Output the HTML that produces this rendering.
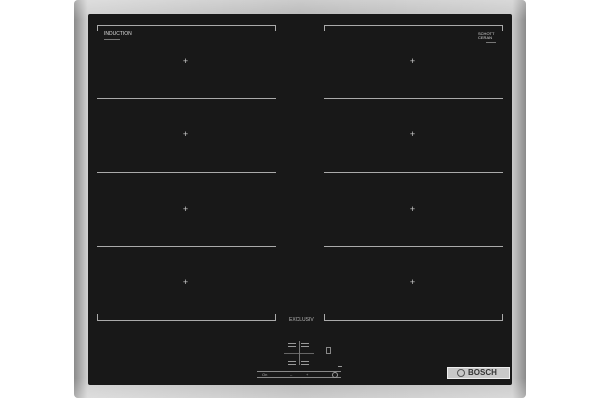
<!DOCTYPE html>
<html><head><meta charset="utf-8"><style>
html,body{margin:0;width:600px;height:400px;background:#fff;overflow:hidden;font-family:"Liberation Sans",sans-serif}
.steel{position:absolute;left:74px;top:0;width:452px;height:398px;border-radius:4px;
background:linear-gradient(90deg,#8a8a8a 0%,#cfcfcf 3%,#b5b5b5 50%,#c8c8c8 97%,#8a8a8a 100%);}
.steel:after{content:"";position:absolute;inset:0;background:linear-gradient(180deg,rgba(255,255,255,.3),rgba(0,0,0,0) 5%,rgba(0,0,0,0) 95%,rgba(255,255,255,.3));border-radius:4px}
.black{position:absolute;left:88px;top:14px;width:424px;height:371px;background:#181818;border-radius:2px}
.ln{position:absolute;height:1px;background:#aaa}
.br{position:absolute;width:1px;height:6px;background:#aaa}
.p{position:absolute;color:#ccc;font-size:9px;line-height:9px;width:9px;text-align:center}
.t{position:absolute;color:#ddd;font-size:5px;line-height:5px}
</style></head><body>
<div class="steel"></div>
<div class="black"></div>
<div class="ln" style="left:97px;top:25px;width:179px"></div>
<div class="br" style="left:97px;top:25px"></div><div class="br" style="left:275px;top:25px"></div>
<div class="ln" style="left:97px;top:98px;width:179px"></div>
<div class="ln" style="left:97px;top:172px;width:179px"></div>
<div class="ln" style="left:97px;top:246px;width:179px"></div>
<div class="ln" style="left:97px;top:320px;width:179px"></div>
<div class="br" style="left:97px;top:314px"></div><div class="br" style="left:275px;top:314px"></div>
<div class="ln" style="left:324px;top:25px;width:179px"></div>
<div class="br" style="left:324px;top:25px"></div><div class="br" style="left:502px;top:25px"></div>
<div class="ln" style="left:324px;top:98px;width:179px"></div>
<div class="ln" style="left:324px;top:172px;width:179px"></div>
<div class="ln" style="left:324px;top:246px;width:179px"></div>
<div class="ln" style="left:324px;top:320px;width:179px"></div>
<div class="br" style="left:324px;top:314px"></div><div class="br" style="left:502px;top:314px"></div>
<div class="p" style="left:181px;top:57px">+</div><div class="p" style="left:408px;top:57px">+</div>
<div class="p" style="left:181px;top:130px">+</div><div class="p" style="left:408px;top:130px">+</div>
<div class="p" style="left:181px;top:205px">+</div><div class="p" style="left:408px;top:205px">+</div>
<div class="p" style="left:181px;top:278px">+</div><div class="p" style="left:408px;top:278px">+</div>
<div class="t" style="left:104px;top:32px">INDUCTION</div>
<div class="ln" style="left:104px;top:39px;width:16px;background:#777"></div>
<div class="t" style="left:478px;top:32px;font-size:4px;line-height:4px">SCHOTT<br>CERAN</div>
<div class="ln" style="left:486px;top:42px;width:10px;background:#777"></div>
<div class="t" style="left:289px;top:318px;font-size:5px;color:#bbb">EXCLUSIV</div>
<div class="ln" style="left:288px;top:343px;width:8px;background:#999"></div>
<div class="ln" style="left:301px;top:343px;width:8px;background:#999"></div>
<div class="ln" style="left:288px;top:346px;width:8px;background:#999"></div>
<div class="ln" style="left:301px;top:346px;width:8px;background:#999"></div>
<div class="ln" style="left:284px;top:353px;width:30px;background:#666"></div>
<div style="position:absolute;left:299px;top:341px;width:1px;height:24px;background:#777"></div>
<div class="ln" style="left:288px;top:361px;width:8px;background:#999"></div>
<div class="ln" style="left:301px;top:361px;width:8px;background:#999"></div>
<div class="ln" style="left:288px;top:364px;width:8px;background:#999"></div>
<div class="ln" style="left:301px;top:364px;width:8px;background:#999"></div>
<div style="position:absolute;left:326px;top:347px;width:3px;height:5px;border:1px solid #888"></div>
<div class="ln" style="left:257px;top:371px;width:84px;background:#888"></div>
<div class="ln" style="left:257px;top:377px;width:84px;background:#888"></div>
<div class="t" style="left:262px;top:372px;font-size:4px;color:#aaa">On</div>
<div class="t" style="left:290px;top:372px;font-size:4px;color:#aaa">–</div>
<div class="t" style="left:306px;top:372px;font-size:4px;color:#aaa">+</div>
<div style="position:absolute;left:332px;top:372px;width:4px;height:4px;border:1px solid #999;border-radius:50%"></div>
<div class="ln" style="left:338px;top:366px;width:4px;background:#999"></div>
<div style="position:absolute;left:447px;top:367px;width:63px;height:12px;background:#c8c8c8;border:1px solid #eee;box-sizing:border-box"></div>
<div style="position:absolute;left:457px;top:369px;width:6px;height:6px;border:1px solid #555;border-radius:50%"></div>
<div style="position:absolute;left:468px;top:368px;font-size:8px;font-weight:bold;color:#333;line-height:10px">BOSCH</div>
</body></html>
